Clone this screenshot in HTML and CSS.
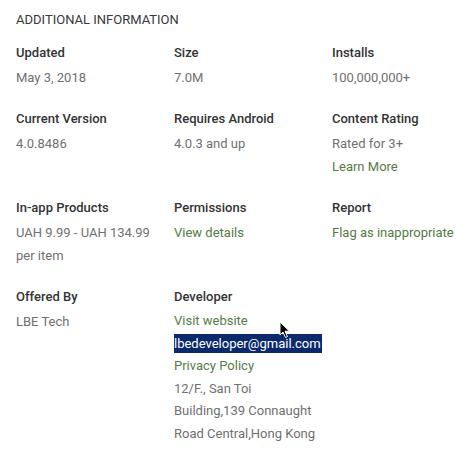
FILE: index.html
```html
<!DOCTYPE html>
<html>
<head>
<meta charset="utf-8">
<link rel="stylesheet" href="styles.css">
</head>
<body>
<div class="page">
  <h2 class="heading">ADDITIONAL INFORMATION</h2>
  <div class="grid">
    <div class="cell"><div class="title">Updated</div><div class="value">May 3, 2018</div></div>
    <div class="cell"><div class="title">Size</div><div class="value">7.0M</div></div>
    <div class="cell"><div class="title">Installs</div><div class="value">100,000,000+</div></div>

    <div class="cell"><div class="title">Current Version</div><div class="value">4.0.8486</div></div>
    <div class="cell"><div class="title">Requires Android</div><div class="value">4.0.3 and up</div></div>
    <div class="cell"><div class="title">Content Rating</div><div class="value">Rated for 3+</div><div class="value"><a class="link">Learn More</a></div></div>

    <div class="cell"><div class="title">In-app Products</div><div class="value narrow">UAH 9.99 - UAH 134.99 per item</div></div>
    <div class="cell"><div class="title">Permissions</div><div class="value"><a class="link">View details</a></div></div>
    <div class="cell"><div class="title">Report</div><div class="value"><a class="link">Flag as inappropriate</a></div></div>

    <div class="cell"><div class="title">Offered By</div><div class="value">LBE Tech</div></div>
    <div class="cell dev">
      <div class="title">Developer</div>
      <div class="value"><a class="link">Visit website</a></div>
      <div class="value"><span class="selected">lbedeveloper@gmail.com</span></div>
      <div class="value"><a class="link">Privacy Policy</a></div>
      <div class="value address">12/F., San Toi Building,139 Connaught Road Central,Hong Kong</div>
      <svg class="cursor" width="12" height="18" viewBox="0 0 12 18"><path d="M1 1 L1 14 L4 11 L6.5 16.5 L8.5 15.6 L6 10.2 L10.5 10.2 Z" fill="#000" stroke="#fff" stroke-width="1"/></svg>
    </div>
    <div class="cell"></div>
  </div>
</div>
</body>
</html>
```
FILE: styles.css
```css
html, body {
  margin: 0;
  padding: 0;
  background: #fff;
}
body {
  font-family: Roboto, "Liberation Sans", Arial, sans-serif;
  font-size: 13px;
}
.page {
  padding: 10px 0 0 16px;
}
.heading {
  margin: 0 0 10px 0;
  font-size: 13px;
  line-height: 20px;
  font-weight: 400;
  color: #383838;
}
.grid {
  display: grid;
  grid-template-columns: 158px 158px 142px;
  row-gap: 17px;
}
.cell {
  position: relative;
}
.title {
  font-weight: 500;
  color: #333;
  line-height: 26px;
}
.value {
  color: #707070;
  line-height: 23px;
}
.narrow {
  width: 135px;
}
.dev .value {
  line-height: 22.5px;
}
.address {
  width: 145px;
}
.link {
  color: #557a45;
  text-decoration: none;
}
.selected {
  background: #0b2a6b;
  color: #fff;
  padding: 2px 1px 2px 0;
}
.cursor {
  position: absolute;
  left: 105px;
  top: 37px;
}
```
